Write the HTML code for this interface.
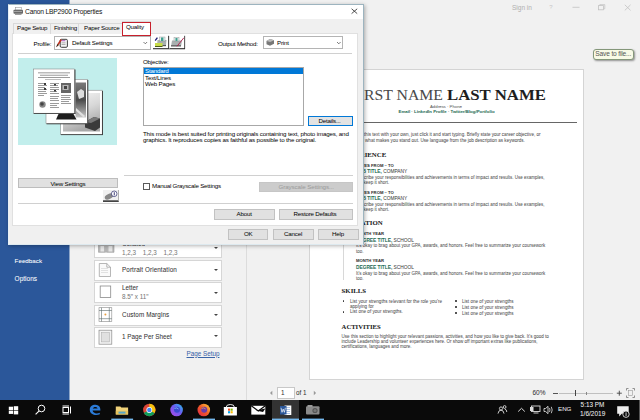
<!DOCTYPE html>
<html><head><meta charset="utf-8">
<style>
*{margin:0;padding:0;box-sizing:border-box}
html,body{width:640px;height:420px;overflow:hidden;background:#f1f1f1;font-family:"Liberation Sans",sans-serif;position:relative}
.a{position:absolute;white-space:nowrap}
.t{position:absolute;white-space:nowrap;line-height:1;-webkit-text-stroke:0.04px currentColor}
.d{-webkit-text-stroke:0}
</style></head><body>
<!-- Word backstage -->
<div class="a" style="left:0;top:0;width:69px;height:400px;background:#2b579a"></div><div class="a" style="left:69px;top:0;width:1px;height:400px;background:#8ea6c8"></div>


<div class="t" style="left:14.6px;top:257.5px;font-size:6.25px;color:#fff">Feedback</div>
<div class="t" style="left:14.6px;top:276px;font-size:6.5px;color:#fff">Options</div>
<div class="a" style="left:246px;top:4px;width:1px;height:396px;background:#dcdcdc"></div>

<!-- top right -->
<div class="t" style="left:512px;top:5px;font-size:6.5px;color:#b0b0b0;-webkit-text-stroke:0">Sign in</div>
<div class="t" style="left:549.2px;top:4.3px;font-size:6px;color:#c8c8c8;-webkit-text-stroke:0">?</div>
<svg class="a" style="left:560px;top:0" width="80" height="16" viewBox="560 0 80 16">
 <line x1="572.5" y1="7.3" x2="579.5" y2="7.3" stroke="#c2c2c2" stroke-width="0.8"/>
 <rect x="598.6" y="5.6" width="5" height="4.2" fill="none" stroke="#c2c2c2" stroke-width="0.8"/>
 <path d="M599.8 5.6 v-1 h5 v4.2 h-1.2" fill="none" stroke="#c2c2c2" stroke-width="0.7"/>
 <path d="M624.8 4.8 L630.6 10.4 M630.6 4.8 L624.8 10.4" stroke="#c2c2c2" stroke-width="0.8"/>
</svg>
<!-- tooltip -->
<div class="a" style="left:593px;top:49px;width:40.5px;height:10.5px;background:#f8fae6;border:1px solid #84977a;border-radius:3px;box-shadow:1px 1px 2px rgba(0,0,0,.4)"></div>
<div class="t" style="left:595.3px;top:50.8px;font-size:6.6px;letter-spacing:-0.15px;color:#555;-webkit-text-stroke:0">Save to file...</div>


<!-- print settings -->
<div class="a" style="left:94px;top:236px;width:128px;height:21.5px;background:#fff;border:1px solid #d6d6d6"></div>
<div class="t" style="left:122px;top:241px;font-size:6.3px;color:#444">Collated</div>
<div class="t" style="left:122px;top:250px;font-size:6.3px;color:#777;word-spacing:5px">1,2,3 1,2,3 1,2,3</div>
<div class="a" style="left:94px;top:259.5px;width:128px;height:21px;background:#fff;border:1px solid #d6d6d6"></div>
<div class="t" style="left:122px;top:266.5px;font-size:6.3px;letter-spacing:0.1px;color:#333">Portrait Orientation</div>
<div class="a" style="left:94px;top:282px;width:128px;height:21px;background:#fff;border:1px solid #d6d6d6"></div>
<div class="t" style="left:122px;top:285px;font-size:6.3px;color:#333">Letter</div>
<div class="t" style="left:122px;top:294px;font-size:6.3px;color:#777">8.5" x 11"</div>
<div class="a" style="left:94px;top:304.5px;width:128px;height:21px;background:#fff;border:1px solid #d6d6d6"></div>
<div class="t" style="left:122px;top:311.5px;font-size:6.3px;letter-spacing:0.1px;color:#333">Custom Margins</div>
<div class="a" style="left:94px;top:327px;width:128px;height:21px;background:#fff;border:1px solid #d6d6d6"></div>
<div class="t" style="left:122px;top:334px;font-size:6.3px;color:#333">1 Page Per Sheet</div>
<div class="t" style="left:186.5px;top:350.5px;font-size:6.3px;color:#3a64a8;text-decoration:underline">Page Setup</div>
<div class="a" style="left:213.5px;top:246.5px;width:0;height:0;border-left:2px solid transparent;border-right:2px solid transparent;border-top:2.5px solid #444"></div><div class="a" style="left:213.5px;top:269px;width:0;height:0;border-left:2px solid transparent;border-right:2px solid transparent;border-top:2.5px solid #444"></div><div class="a" style="left:213.5px;top:292px;width:0;height:0;border-left:2px solid transparent;border-right:2px solid transparent;border-top:2.5px solid #444"></div><div class="a" style="left:213.5px;top:313.5px;width:0;height:0;border-left:2px solid transparent;border-right:2px solid transparent;border-top:2.5px solid #444"></div><div class="a" style="left:213.5px;top:335px;width:0;height:0;border-left:2px solid transparent;border-right:2px solid transparent;border-top:2.5px solid #444"></div>

<svg class="a" style="left:90px;top:236px" width="30" height="115" viewBox="90 236 30 115">
 <!-- collated -->
 <g fill="#b8b8b8" stroke="#9a9a9a" stroke-width="0.6"><path d="M98.5 243 h7 v9.3 h-7 z"/><path d="M106.5 243 h7.5 v9.3 h-7.5 z"/></g>
 <g fill="#e6e6e6"><rect x="100.5" y="246" width="3.5" height="5.5"/><rect x="108.5" y="246" width="3.8" height="5.5"/></g>
 <!-- portrait -->
 <path d="M99.3 263.5 h7.5 l3.7 3.7 v9.3 h-11.2 z" fill="#fafafa" stroke="#9a9a9a" stroke-width="0.7"/>
 <path d="M106.8 263.5 v3.7 h3.7" fill="none" stroke="#9a9a9a" stroke-width="0.7"/>
 <g fill="#d8d8d8"><rect x="101" y="268" width="7" height="0.75"/><rect x="101" y="270" width="7" height="0.75"/><rect x="101" y="272" width="7" height="0.75"/></g>
 <!-- letter -->
 <rect x="100.2" y="286" width="10.5" height="11.5" fill="#fff" stroke="#8a8a8a" stroke-width="0.8"/>
 <!-- margins -->
 <rect x="99" y="307.7" width="12.8" height="13.8" fill="#fff" stroke="#888" stroke-width="0.6"/>
 <g stroke="#5a6a6a" stroke-width="0.6"><line x1="101.5" y1="307.7" x2="101.5" y2="321.5"/><line x1="109.3" y1="307.7" x2="109.3" y2="321.5"/><line x1="99" y1="310.5" x2="111.8" y2="310.5"/><line x1="99" y1="318.7" x2="111.8" y2="318.7"/></g>
 <circle cx="105.4" cy="314.6" r="1" fill="#e8a040"/>
 <!-- pages per sheet -->
 <rect x="99" y="330.2" width="12.8" height="14" fill="#f2f2f2" stroke="#8a8a8a" stroke-width="0.7"/>
 <rect x="101.3" y="332.5" width="8.2" height="9.4" fill="#e0e0e0" stroke="#aaa" stroke-width="0.5"/>
</svg>

<!-- page nav -->
<svg class="a" style="left:266px;top:388px" width="54" height="10" viewBox="266 388 54 10"><path d="M272.3 390.8 L270 393 L272.3 395.2 Z" fill="#999"/><path d="M313.8 390.8 L316.1 393 L313.8 395.2 Z" fill="#999"/></svg>
<div class="a" style="left:277px;top:387px;width:17.5px;height:11.5px;background:#fff;border:1px solid #c8c8c8"></div>
<div class="t" style="left:281px;top:390px;font-size:6.3px;color:#333">1</div>
<div class="t" style="left:296px;top:390px;font-size:6.3px;color:#333">of 1</div>

<!-- zoom -->
<div class="t" style="left:532.5px;top:390px;font-size:6.5px;color:#333">60%</div>
<div class="a" style="left:553px;top:393px;width:4.5px;height:1px;background:#555"></div>
<div class="a" style="left:559px;top:393px;width:54px;height:1px;background:#c0c0c0"></div>
<div class="a" style="left:575px;top:390px;width:1px;height:6px;background:#444"></div>
<div class="a" style="left:586px;top:392px;width:1px;height:3px;background:#888"></div>
<svg class="a" style="left:614px;top:386px" width="26" height="14" viewBox="614 386 26 14"><path d="M616.8 393.2 h5 M619.3 390.7 v5" stroke="#444" stroke-width="0.9"/><path d="M626.5 390.5 v-2 h2 M632.5 388.5 h2 v2 M634.5 395.5 v2 h-2 M628.5 397.5 h-2 v-2" fill="none" stroke="#777" stroke-width="0.8"/><rect x="628.5" y="390.5" width="4" height="5" fill="none" stroke="#999" stroke-width="0.6"/></svg>


<!-- page -->
<div class="a" style="left:309px;top:69px;width:275px;height:311px;background:#fff;border:1px solid #d4d4d4"></div>


<!-- resume content -->
<div class="t" style="left:349.5px;top:87.4px;font-size:15.2px;font-family:'Liberation Serif',serif;color:#4a4a4a;transform:scaleX(1.037);transform-origin:0 0">FIRST NAME</div>
<div class="t" style="left:447px;top:87.4px;font-size:15.2px;font-family:'Liberation Serif',serif;font-weight:700;color:#1e1e1e;transform:scaleX(1.104);transform-origin:0 0">LAST NAME</div>
<div class="t" style="left:430px;top:104.5px;font-size:4.3px;color:#666">Address · Phone</div>
<div class="t" style="left:398.5px;top:109.5px;font-size:4.36px;font-weight:700;color:#2b6f58">Email · LinkedIn Profile · Twitter/Blog/Portfolio</div>
<div class="a" style="left:316px;top:121.8px;width:261px;height:1.4px;background:#666"></div>
<div class="t" style="left:341.6px;top:132.3px;font-size:4.55px;color:#555;line-height:5.4px">To replace this text with your own, just click it and start typing. Briefly state your career objective, or<br>summarize what makes you stand out. Use language from the job description as keywords.</div>

<div class="t" style="left:341.6px;top:152px;font-size:6.8px;font-family:'Liberation Serif',serif;font-weight:700;color:#1a1a1a">EXPERIENCE</div>
<div class="a" style="left:343px;top:160px;width:1px;height:53px;background:#d8d8d8"></div>
<div class="t" style="left:356px;top:163.7px;font-size:4.2px;font-weight:700;color:#303030">DATES FROM – TO</div>
<div class="t" style="left:356px;top:170px;font-size:4.8px;color:#404040"><b style="color:#2b6f58">JOB TITLE,</b> COMPANY</div>
<div class="t" style="left:356px;top:174.8px;font-size:4.51px;color:#555;line-height:5.5px">Describe your responsibilities and achievements in terms of impact and results. Use examples,<br>but keep it short.</div>
<div class="t" style="left:356px;top:191px;font-size:4.2px;font-weight:700;color:#303030">DATES FROM – TO</div>
<div class="t" style="left:356px;top:197px;font-size:4.8px;color:#404040"><b style="color:#2b6f58">JOB TITLE,</b> COMPANY</div>
<div class="t" style="left:356px;top:201.8px;font-size:4.51px;color:#555;line-height:5.5px">Describe your responsibilities and achievements in terms of impact and results. Use examples,<br>but keep it short.</div>

<div class="t" style="left:341.6px;top:220.2px;font-size:6.8px;font-family:'Liberation Serif',serif;font-weight:700;color:#1a1a1a">EDUCATION</div>
<div class="a" style="left:343px;top:229px;width:1px;height:51px;background:#d8d8d8"></div>
<div class="t" style="left:356px;top:231.5px;font-size:4.2px;font-weight:700;color:#303030">MONTH YEAR</div>
<div class="t" style="left:356px;top:239px;font-size:4.8px;color:#404040"><b style="color:#2b6f58">DEGREE TITLE,</b> SCHOOL</div>
<div class="t" style="left:356px;top:243px;font-size:4.51px;color:#555;line-height:5.6px">It's okay to brag about your GPA, awards, and honors. Feel free to summarize your coursework<br>too.</div>
<div class="t" style="left:356px;top:258.5px;font-size:4.2px;font-weight:700;color:#303030">MONTH YEAR</div>
<div class="t" style="left:356px;top:265.8px;font-size:4.8px;color:#404040"><b style="color:#2b6f58">DEGREE TITLE,</b> SCHOOL</div>
<div class="t" style="left:356px;top:270.6px;font-size:4.51px;color:#555;line-height:5.3px">It's okay to brag about your GPA, awards, and honors. Feel free to summarize your coursework<br>too.</div>

<div class="t" style="left:341.6px;top:287.5px;font-size:6.8px;font-family:'Liberation Serif',serif;font-weight:700;color:#1a1a1a">SKILLS</div>
<div class="a" style="left:342.5px;top:300.2px;width:1.6px;height:1.6px;border-radius:50%;background:#333"></div>
<div class="a" style="left:342.5px;top:311px;width:1.6px;height:1.6px;border-radius:50%;background:#333"></div>
<div class="t" style="left:350px;top:298.5px;font-size:4.6px;color:#555;line-height:5.6px">List your strengths relevant for the role you're<br>applying for</div>
<div class="t" style="left:350px;top:309.6px;font-size:4.6px;color:#555">List one of your strengths.</div>
<div class="a" style="left:455.2px;top:300.2px;width:1.6px;height:1.6px;border-radius:50%;background:#333"></div>
<div class="a" style="left:455.2px;top:306.2px;width:1.6px;height:1.6px;border-radius:50%;background:#333"></div>
<div class="a" style="left:455.2px;top:312.2px;width:1.6px;height:1.6px;border-radius:50%;background:#333"></div>
<div class="t" style="left:462px;top:299px;font-size:4.6px;color:#555;line-height:6px">List one of your strengths<br>List one of your strengths<br>List one of your strengths</div>

<div class="t" style="left:341.6px;top:323.5px;font-size:6.65px;font-family:'Liberation Serif',serif;font-weight:700;color:#1a1a1a">ACTIVITIES</div>
<div class="t" style="left:341.6px;top:334.2px;font-size:4.52px;color:#555;line-height:5.1px">Use this section to highlight your relevant passions, activities, and how you like to give back. It's good to<br>include Leadership and volunteer experiences here. Or show off important extras like publications,<br>certifications, languages and more.</div>

<!-- taskbar -->

<div class="a" style="left:0;top:400px;width:640px;height:20px;background:#0a0a0a"></div>
<svg class="a" style="left:0;top:400px" width="640" height="20" viewBox="0 400 640 20">
 <!-- windows -->
 <g fill="#fff"><rect x="8.8" y="406.7" width="4.3" height="3.3"/><rect x="13.8" y="406.2" width="4.4" height="3.8"/><rect x="8.8" y="410.6" width="4.3" height="3.3"/><rect x="13.8" y="410.6" width="4.4" height="3.8"/></g>
 <!-- search -->
 <circle cx="41.5" cy="408.5" r="3.3" fill="none" stroke="#fff" stroke-width="1"/>
 <line x1="39.2" y1="410.8" x2="35.6" y2="414.3" stroke="#fff" stroke-width="1.1"/>
 <!-- task view -->
 <g fill="none" stroke="#fff" stroke-width="1"><rect x="63" y="407.5" width="5.5" height="5"/><line x1="62.5" y1="406" x2="69" y2="406"/><line x1="62.5" y1="414" x2="69" y2="414"/><line x1="70.5" y1="406.5" x2="70.5" y2="413.5"/></g>
 <!-- edge -->
 <path d="M100.4 410.6 H92.6 C92.9 413.2 96.4 414.3 99.8 412.8 V414.3 C95.5 416 90 414.5 89.8 410 C89.6 406.3 92.6 404.6 95.6 404.8 C98.6 405 100.6 406.8 100.4 410.6 Z M92.8 408.6 H97.6 C97.5 406.6 93.3 406.4 92.8 408.6 Z" fill="#2b7bd8"/>
 <!-- explorer -->
 <path d="M115.8 406.5 h4.5 l1 1 h6.8 v7 h-12.3 z" fill="#f0d27a"/>
 <rect x="115.8" y="410.8" width="12.3" height="3.7" fill="#e6c35c"/>
 <rect x="118.5" y="411.6" width="7" height="2" fill="#5aa7c8"/>
 <rect x="111.3" y="418.6" width="21.8" height="1.4" fill="#76b9ed"/>
 <!-- chrome -->
 <circle cx="149.3" cy="410" r="6.2" fill="#db4437"/>
 <path d="M149.3 410 L154.7 413.1 A6.2 6.2 0 0 1 143.9 413.1 Z" fill="#0f9d58"/>
 <path d="M149.3 410 L149.3 403.8 A6.2 6.2 0 0 1 154.7 413.1 Z" fill="#f4c20d"/>
 <circle cx="149.3" cy="410" r="2.9" fill="#fff"/><circle cx="149.3" cy="410" r="2.2" fill="#4285f4"/>
 <!-- firefox dev -->
 <defs>
  <linearGradient id="ffd" x1="0" y1="1" x2="1" y2="0"><stop offset="0" stop-color="#b04ae8"/><stop offset="0.55" stop-color="#6a5cf0"/><stop offset="1" stop-color="#20c8f0"/></linearGradient>
  <linearGradient id="ff" x1="0" y1="1" x2="1" y2="0"><stop offset="0" stop-color="#e0244a"/><stop offset="0.5" stop-color="#f05a28"/><stop offset="1" stop-color="#ffd23a"/></linearGradient>
 </defs>
 <circle cx="176.6" cy="410" r="6.3" fill="url(#ffd)"/>
 <circle cx="177" cy="409.8" r="3" fill="#3a4ad0"/>
 <path d="M174.5 408.5 q2 -1.5 4 0.5" fill="none" stroke="#8fd8ff" stroke-width="0.7"/>
 <!-- firefox -->
 <circle cx="203.8" cy="410" r="6.3" fill="url(#ff)"/>
 <circle cx="204.2" cy="409.8" r="3" fill="#6a3aa8"/>
 <path d="M201.7 408.5 q2 -1.5 4 0.5" fill="none" stroke="#ffb040" stroke-width="0.7"/>
 <rect x="193" y="418.6" width="22" height="1.4" fill="#76b9ed"/>
 <!-- store -->
 <path d="M226.3 407 q0 -2.5 4 -2.5 q4 0 4 2.5" fill="none" stroke="#fff" stroke-width="0.9"/>
 <rect x="223.8" y="407" width="13.1" height="8.5" fill="#fff"/>
 <rect x="228" y="408.6" width="2.1" height="2.1" fill="#f25022"/><rect x="230.6" y="408.6" width="2.1" height="2.1" fill="#7fba00"/>
 <rect x="228" y="411.2" width="2.1" height="2.1" fill="#00a4ef"/><rect x="230.6" y="411.2" width="2.1" height="2.1" fill="#ffb900"/>
 <!-- mail -->
 <rect x="251.3" y="405.8" width="14" height="8.8" fill="#fff"/>
 <path d="M251.3 405.8 L258.3 411 L265.3 405.8" fill="none" stroke="#0a0a0a" stroke-width="1.2"/>
 <path d="M256 410.5 L265.3 408.5 L263 412" fill="#0a0a0a"/>
 <!-- word -->
 <rect x="272" y="400" width="27" height="20" fill="#333"/>
 <rect x="284.5" y="405.5" width="6.8" height="9.5" fill="#fff"/>
 <g fill="#9db8e0"><rect x="286" y="407" width="4" height="0.8"/><rect x="286" y="409" width="4" height="0.8"/><rect x="286" y="411" width="4" height="0.8"/><rect x="286" y="413" width="4" height="0.8"/></g>
 <rect x="280" y="406" width="6.5" height="8.5" fill="#2b579a"/>
 <path d="M281 407.8 l1 4.5 l1.2 -3.2 l1.2 3.2 l1 -4.5" fill="none" stroke="#fff" stroke-width="0.7"/>
 <rect x="272" y="418.6" width="27" height="1.4" fill="#76b9ed"/>
 <!-- camera -->
 <rect x="306" y="406.3" width="13.5" height="8.3" rx="1" fill="#8a8a8a"/>
 <rect x="307.5" y="405" width="5" height="2" fill="#9a9a9a"/>
 <circle cx="315" cy="410.5" r="2.6" fill="#555"/><circle cx="315" cy="410.5" r="1.5" fill="#777"/>
 <rect x="302" y="418.6" width="22" height="1.4" fill="#76b9ed"/>
 <!-- people -->
 <g fill="none" stroke="#ddd" stroke-width="0.9"><circle cx="501" cy="408.5" r="1.6"/><path d="M498 413.6 q0.5 -3.5 3 -3.5 q2.5 0 3 3.5"/><circle cx="504.6" cy="407" r="1.4"/><path d="M504.8 409 q1.8 0.3 2 3"/></g>
 <!-- chevron -->
 <path d="M518.2 411.5 L521.5 408.3 L524.8 411.5" fill="none" stroke="#ddd" stroke-width="1"/>
 <!-- network -->
 <g fill="none" stroke="#ddd" stroke-width="0.9"><rect x="531.5" y="406" width="8.5" height="5.5"/><path d="M533.5 413 h5"/></g>
 <rect x="530" y="407" width="3.5" height="4" fill="#ddd"/>
 <!-- volume -->
 <path d="M544 408.5 h1.6 l2.4 -2.2 v7.4 l-2.4 -2.2 h-1.6 z" fill="none" stroke="#ddd" stroke-width="0.9"/>
 <path d="M549.5 408 q1 2 0 4 M551.3 406.8 q1.8 3.2 0 6.4" fill="none" stroke="#ddd" stroke-width="0.8"/>
 <!-- notification -->
 <path d="M617.2 406.3 h11.5 v7.5 h-7 l-2.5 2.7 v-2.7 h-2 z" fill="#eee"/>
 <circle cx="626" cy="414.2" r="3.2" fill="#0a0a0a" stroke="#ddd" stroke-width="0.9"/>
 <rect x="625.6" y="412.4" width="0.9" height="3.6" fill="#ddd"/>
 <rect x="639" y="400" width="1" height="20" fill="#555"/>
</svg>
<div class="t" style="left:558px;top:406.3px;font-size:6.2px;color:#eee">ENG</div>
<div class="t" style="left:580.6px;top:402px;font-size:6.4px;color:#eee">5:13 PM</div>
<div class="t" style="left:580px;top:410.8px;font-size:6.5px;color:#eee">1/6/2019</div>


<!-- dialog -->
<div class="a" style="left:8px;top:4px;width:356px;height:241px;background:#f0f0f0;border:1px solid #9db4bf;border-left-color:#e6f0f6;border-bottom-color:#dde9ef;box-shadow:1px 1px 4px rgba(0,0,0,.3)"></div>
<div class="a" style="left:9px;top:5px;width:354px;height:14px;background:#fff"></div>
<div class="t d" style="left:25px;top:9.2px;font-size:6.7px;letter-spacing:-0.18px;color:#111">Canon LBP2900 Properties</div>
<svg class="a" style="left:348px;top:6px" width="12" height="10" viewBox="348 6 12 10"><path d="M351.6 8.8 L357.2 13.6 M357.2 8.8 L351.6 13.6" stroke="#222" stroke-width="0.8"/></svg>
<div class="a" style="left:12px;top:33px;width:346px;height:193px;background:#fff;border:1px solid #e0e0e0"></div>

<!-- tabs -->
<div class="a" style="left:13px;top:23px;width:38px;height:11px;background:#f0f0f0;border:1px solid #d9d9d9;border-bottom:none"></div>
<div class="a" style="left:50px;top:23px;width:29px;height:11px;background:#f0f0f0;border:1px solid #d9d9d9;border-bottom:none"></div>
<div class="a" style="left:78px;top:23px;width:45px;height:11px;background:#f0f0f0;border:1px solid #d9d9d9;border-bottom:none"></div>
<div class="a" style="left:122px;top:21px;width:29px;height:13px;background:#fff;border:1px solid #d9d9d9;border-bottom:none"></div>
<div class="t d" style="left:17px;top:25.30px;font-size:6.2px;color:#000;letter-spacing:-0.2px">Page Setup</div>
<div class="t d" style="left:54px;top:25.30px;font-size:6.2px;color:#000;letter-spacing:-0.2px">Finishing</div>
<div class="t d" style="left:84px;top:25.30px;font-size:6.2px;color:#000;letter-spacing:-0.2px">Paper Source</div>
<div class="t d" style="left:126px;top:24.30px;font-size:6.2px;color:#000;letter-spacing:-0.2px">Quality</div>
<div class="a" style="left:122px;top:21.6px;width:28.6px;height:14px;border:1.6px solid #c8202c"></div>

<!-- profile row -->
<div class="t d" style="left:33.5px;top:41.30px;font-size:6.2px;color:#000;letter-spacing:-0.2px">Profile:</div>
<div class="a" style="left:54px;top:36px;width:97px;height:14px;background:#fff;border:1px solid #b4b4b4"></div>
<div class="t d" style="left:72px;top:40.30px;font-size:6.2px;color:#000;letter-spacing:-0.2px">Default Settings</div>
<div class="a" style="left:152.5px;top:36px;width:16px;height:14px;background:#e8e8e8;border:1px solid #c8c8c8"></div>
<div class="a" style="left:169px;top:36px;width:16px;height:14px;background:#e8e8e8;border:1px solid #c8c8c8"></div>
<div class="t d" style="left:218px;top:40.80px;font-size:6.2px;color:#000;letter-spacing:-0.2px">Output Method:</div>
<div class="a" style="left:262.5px;top:36px;width:80px;height:13px;background:#fff;border:1px solid #b4b4b4"></div>
<div class="t d" style="left:277px;top:40.30px;font-size:6.2px;color:#000;letter-spacing:-0.2px">Print</div>
<div class="a" style="left:18px;top:53px;width:334px;height:1px;background:#d0d0d0"></div>

<!-- preview -->
<div class="a" style="left:18px;top:58px;width:98.6px;height:86.6px;background:#c2eeec"></div>
<svg class="a" style="left:18px;top:58px" width="100" height="87" viewBox="18 58 100 87">
 <defs>
  <linearGradient id="g3" x1="0" y1="0" x2="0.4" y2="1"><stop offset="0" stop-color="#fafafa"/><stop offset="0.55" stop-color="#d8d8d8"/><stop offset="1" stop-color="#a8a8a8"/></linearGradient>
  <linearGradient id="g2" x1="0" y1="0" x2="0" y2="1"><stop offset="0" stop-color="#7a7a7a"/><stop offset="0.5" stop-color="#4a4a4a"/><stop offset="1" stop-color="#c8c8c8"/></linearGradient>
 </defs>
 <!-- third page -->
 <rect x="60.6" y="90.2" width="41.6" height="44.2" fill="#fff" stroke="#777" stroke-width="0.5"/>
 <rect x="102" y="91" width="1" height="44" fill="#444"/><rect x="61" y="134.2" width="42" height="0.9" fill="#444"/>
 <rect x="63" y="93" width="37" height="38.5" fill="url(#g3)"/>
 <path d="M85 122 l9 -5 l6 1.5 v9 l-5 3.5 l-10 -3.5z" fill="#3a3a3a"/>
 <path d="M85 122 l9 -5 l6 1.5 l-9 4.5z" fill="#777"/>
 <!-- second page -->
 <rect x="46" y="79.4" width="41.7" height="44.3" fill="#fff" stroke="#777" stroke-width="0.5"/>
 <rect x="87.3" y="80" width="1" height="44" fill="#444"/><rect x="46.5" y="123.4" width="42" height="0.9" fill="#444"/>
 <rect x="75.5" y="82.5" width="10.5" height="35" fill="url(#g2)"/>
 <path d="M77 92 l4 -3 l3 2 v6 l-5 2z" fill="#ddd"/>
 <path d="M76 108 l9 8 l-1.5 1.5 l-8 -7z" fill="#e0e0e0"/>
 <path d="M56 119.5 l2.5 -5.5 h15 l3 5.5z" fill="#1e1e1e"/>
 <!-- front page -->
 <rect x="33.4" y="69" width="41.3" height="44.2" fill="#fff" stroke="#777" stroke-width="0.5"/>
 <rect x="74.5" y="69.5" width="1" height="44.2" fill="#444"/><rect x="33.8" y="113" width="41.7" height="0.9" fill="#444"/>
 <g fill="#7a7a7a">
  <rect x="38" y="72.5" width="32" height="0.75"/><rect x="40" y="74.8" width="28" height="0.75"/><rect x="38" y="77.2" width="32" height="0.75"/><rect x="45" y="79.4" width="16" height="0.5"/>
  <rect x="38" y="83" width="8" height="0.75"/><rect x="38" y="85" width="9" height="0.75"/><rect x="38" y="87" width="7" height="0.75"/><rect x="38" y="89" width="9" height="0.75"/><rect x="38" y="91" width="8" height="0.75"/><rect x="38" y="93" width="9" height="0.75"/><rect x="38" y="95" width="6" height="0.75"/>
  <rect x="50" y="83" width="9" height="0.75"/><rect x="50" y="85" width="8" height="0.75"/><rect x="50" y="87" width="9" height="0.75"/><rect x="50" y="89" width="9" height="0.75"/><rect x="50" y="91" width="7" height="0.75"/><rect x="50" y="93" width="9" height="0.75"/><rect x="50" y="96" width="9" height="0.75"/><rect x="50" y="98" width="8" height="0.75"/><rect x="50" y="100" width="9" height="0.75"/><rect x="50" y="103" width="9" height="0.75"/><rect x="50" y="105" width="7" height="0.75"/><rect x="50" y="107" width="9" height="0.75"/>
  <rect x="61" y="95" width="10" height="0.75"/><rect x="61" y="97" width="9" height="0.75"/><rect x="61" y="99" width="10" height="0.75"/><rect x="61" y="101" width="8" height="0.75"/><rect x="61" y="103" width="10" height="0.75"/>
 </g>
 <g fill="#3a3a3a"><rect x="44" y="83" width="2" height="2"/><rect x="44" y="88" width="2" height="2"/><rect x="54" y="84" width="2" height="1.5"/><rect x="54" y="90" width="2" height="1.5"/></g>
 <rect x="61" y="83" width="10" height="10" fill="#666"/><rect x="62.5" y="85" width="6" height="5" fill="#b8b8b8"/><rect x="64" y="86" width="3" height="3" fill="#444"/>
 <circle cx="42.5" cy="104.5" r="3.2" fill="#888"/><circle cx="42" cy="104" r="1.8" fill="#444"/>
</svg>


<!-- objective -->
<div class="t d" style="left:143px;top:59.30px;font-size:6.2px;color:#000;letter-spacing:-0.2px">Objective:</div>
<div class="a" style="left:142.5px;top:67px;width:161px;height:59px;background:#fff;border:1px solid #a8a8a8"></div>
<div class="a" style="left:143.5px;top:68px;width:159px;height:6px;background:#0078d7"></div>
<div class="t d" style="left:145px;top:68.30px;font-size:6.2px;color:#fff;letter-spacing:-0.2px">Standard</div>
<div class="t d" style="left:145px;top:74.6px;font-size:6.2px;color:#000;letter-spacing:-0.2px">Text/Lines</div>
<div class="t d" style="left:145px;top:81.1px;font-size:6.2px;color:#000;letter-spacing:-0.2px">Web Pages</div>
<div class="a" style="left:307.5px;top:116px;width:45.5px;height:10px;background:#e3e3e3;border:1px solid #0078d7"></div>
<div class="t d" style="left:318.5px;top:117.80px;font-size:6.2px;color:#000;letter-spacing:-0.2px">Details...</div>
<div class="t d" style="left:143px;top:130.80px;font-size:6.2px;color:#000;line-height:5.9px;letter-spacing:-0.155px">This mode is best suited for printing originals containing text, photo images, and<br>graphics. It reproduces copies as faithful as possible to the original.</div>

<div class="a" style="left:124px;top:175px;width:229px;height:1px;background:#d0d0d0"></div>
<div class="a" style="left:18px;top:177.5px;width:100px;height:10.5px;background:#e1e1e1;border:1px solid #bdbdbd"></div>
<div class="t d" style="left:50.5px;top:180.80px;font-size:6.2px;color:#000;letter-spacing:-0.2px">View Settings</div>
<div class="a" style="left:142.5px;top:183px;width:7px;height:7px;background:#fff;border:1px solid #5a5a5a"></div>
<div class="t d" style="left:152px;top:183.30px;font-size:6.2px;color:#000;letter-spacing:-0.2px">Manual Grayscale Settings</div>
<div class="a" style="left:259px;top:181.5px;width:94px;height:10px;background:#cccccc;border:1px solid #c6c6c6"></div>
<div class="t d" style="left:278.5px;top:183.80px;font-size:6.2px;letter-spacing:-0.08px;color:#9a9a9a">Grayscale Settings...</div>
<div class="a" style="left:103px;top:190px;width:16px;height:12px;background:#f0f0f0;border-bottom:1px solid #444;border-right:1px solid #999"></div>
<div class="a" style="left:18px;top:203px;width:335px;height:1px;background:#d0d0d0"></div>
<div class="a" style="left:214px;top:209px;width:61px;height:10.5px;background:#e1e1e1;border:1px solid #c2c2c2"></div>
<div class="t d" style="left:236.5px;top:211.30px;font-size:6.2px;color:#000;letter-spacing:-0.2px">About</div>
<div class="a" style="left:279px;top:209px;width:74px;height:10.5px;background:#e1e1e1;border:1px solid #c2c2c2"></div>
<div class="t d" style="left:293.5px;top:211.30px;font-size:6.2px;color:#000;letter-spacing:-0.2px">Restore Defaults</div>

<div class="a" style="left:227.8px;top:229px;width:40.5px;height:11px;background:#e1e1e1;border:1px solid #c2c2c2"></div>
<div class="t d" style="left:244px;top:231.30px;font-size:6.2px;color:#000;letter-spacing:-0.2px">OK</div>
<div class="a" style="left:273px;top:229px;width:40.5px;height:11px;background:#e1e1e1;border:1px solid #c2c2c2"></div>
<div class="t d" style="left:284px;top:231.30px;font-size:6.2px;color:#000;letter-spacing:-0.2px">Cancel</div>
<div class="a" style="left:318px;top:229px;width:40.5px;height:11px;background:#e1e1e1;border:1px solid #c2c2c2"></div>
<div class="t d" style="left:332px;top:231.30px;font-size:6.2px;color:#000;letter-spacing:-0.2px">Help</div>

<svg class="a" style="left:0;top:0" width="380" height="250" viewBox="0 0 380 250">
 <!-- title printer -->
 <rect x="13.5" y="9.8" width="9.5" height="4" rx="0.8" fill="#6a6a6a"/>
 <rect x="15.3" y="7.6" width="6" height="2.2" fill="#fff" stroke="#888" stroke-width="0.5"/>
 <rect x="15" y="13.2" width="6.5" height="1.6" fill="#888"/>
 <g fill="#ddd"><rect x="14.5" y="11" width="1" height="1"/><rect x="16.5" y="11" width="1" height="1"/><rect x="18.5" y="11" width="1" height="1"/><rect x="20.5" y="11" width="1" height="1"/></g>
 <!-- profile icon -->
 <rect x="60.2" y="39.3" width="7.2" height="8" rx="1.2" fill="#f4f4f4" stroke="#2a2a2a" stroke-width="0.9"/>
 <rect x="61.3" y="40.2" width="4" height="1" fill="#b060c0"/>
 <g fill="#999"><rect x="61.5" y="42.5" width="4" height="0.75"/><rect x="61.5" y="44.2" width="4" height="0.75"/></g>
 <path d="M56.2 47.2 l1.2 -3.2 l3.2 -5 l1.3 0.9 l-3.2 5z" fill="#c03020"/>
 <path d="M57.4 44 l1.3 0.9 l-0.5 0.8 l-1.3 -0.9z" fill="#e8c060"/>
 <path d="M56.2 47.2 l1.2 -3.2 l1.3 0.9z" fill="#222"/>
 <path d="M143.5 42 l1.8 1.8 l1.8 -1.8" fill="none" stroke="#444" stroke-width="0.7"/>
 <!-- icon button 1 -->
 <rect x="153" y="35.8" width="15.8" height="12.8" fill="#fff"/>
 <rect x="153" y="48" width="15.8" height="0.8" fill="#222"/><rect x="168.2" y="35.8" width="0.8" height="13" fill="#222"/>
 <path d="M157.5 40 h9 l-0.5 5.5 h-9z" fill="#a9b0b0"/>
 <rect x="159.5" y="37" width="5.5" height="4" fill="#e8f0f0" stroke="#888" stroke-width="0.4"/>
 <rect x="161" y="37.5" width="2.4" height="3.5" fill="#3fa08f"/>
 <rect x="157" y="45" width="9" height="1.2" fill="#555"/>
 <rect x="155" y="43" width="7.5" height="3.2" fill="#c8dc48"/><rect x="155" y="46" width="7.5" height="1" fill="#4a5a18"/>
 <path d="M155.2 40.6 l2.2 -3" stroke="#1a1a70" stroke-width="1.3"/>
 <!-- icon button 2 -->
 <rect x="169.5" y="35.8" width="15.5" height="12.8" fill="#fff"/>
 <rect x="169.5" y="48" width="15.5" height="0.8" fill="#222"/><rect x="184.3" y="35.8" width="0.8" height="13" fill="#222"/>
 <path d="M172 40.5 h10 l-0.8 5 h-10z" fill="#a9b0b0"/>
 <rect x="174" y="37.5" width="5" height="3.5" fill="#e8f0f0" stroke="#888" stroke-width="0.4"/>
 <rect x="175.5" y="38" width="2" height="3" fill="#3fa08f"/>
 <rect x="171" y="45.2" width="10" height="1.3" fill="#555"/>
 <path d="M177 46.3 l6.8 -8.5" stroke="#b01848" stroke-width="0.9"/>
 <!-- output printer -->
 <path d="M266.5 41 l3.5 -2 l4 1.2 v3.5 l-4 2 l-3.5 -1.5z" fill="#777"/>
 <path d="M266.5 41 l3.5 -2 l4 1.2 l-3.8 1.8z" fill="#bbb"/>
 <path d="M337 42 l1.8 1.8 l1.8 -1.8" fill="none" stroke="#444" stroke-width="0.7"/>
 <!-- view settings icon -->
 <rect x="103" y="200.2" width="15.5" height="0.8" fill="#555"/><rect x="118" y="190" width="0.7" height="11" fill="#bbb"/>
 <ellipse cx="109" cy="196.5" rx="4.5" ry="2.6" transform="rotate(-25 109 196.5)" fill="#888"/>
 <circle cx="114.2" cy="193.8" r="2.8" fill="#fff" stroke="#2a2a6a" stroke-width="0.7"/>
 <rect x="113.8" y="192.2" width="0.9" height="3.2" fill="#2a2a6a"/>
</svg>
</body></html>
